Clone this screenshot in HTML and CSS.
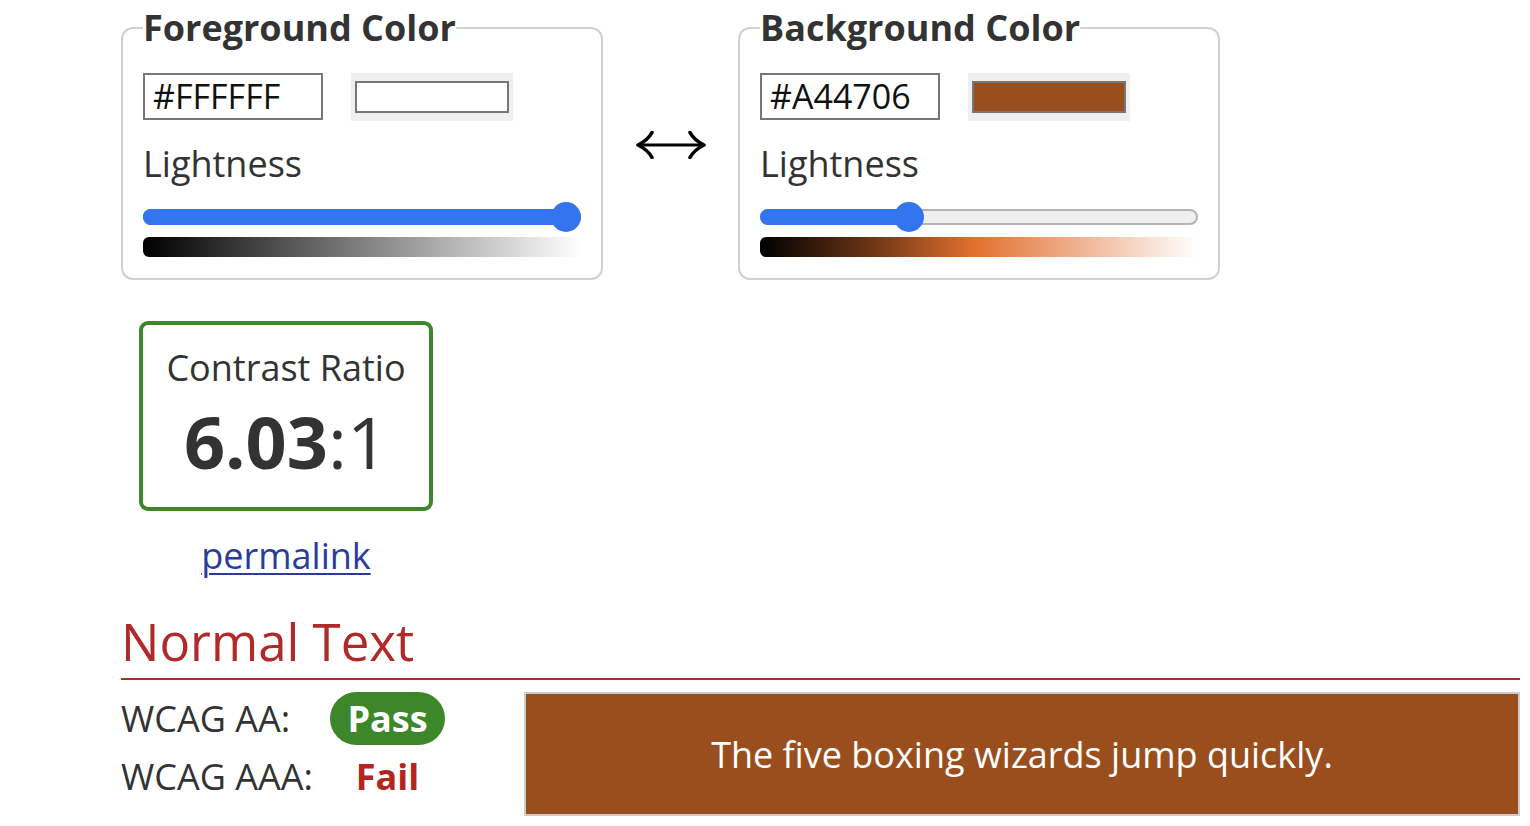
FILE: index.html
```html
<!DOCTYPE html>
<html lang="en">
<head>
<meta charset="utf-8">
<title>Contrast Checker</title>
<link rel="stylesheet" href="styles.css">
</head>
<body>
<main class="page">
  <div class="pickers">
    <fieldset class="picker">
      <legend class="picker-title">Foreground Color</legend>
      <div class="value-row">
        <input class="hex-input" type="text" value="#FFFFFF" aria-label="Foreground hex">
        <div class="swatch-wrap"><div class="swatch swatch-fg"></div></div>
      </div>
      <div class="label">Lightness</div>
      <div class="slider">
        <div class="track"></div>
        <div class="fill" style="width: 423px"></div>
        <div class="thumb" style="left: 408px"></div>
      </div>
      <div class="gradient gradient-fg"></div>
    </fieldset>

    <div class="swap" aria-label="swap colors">
      <svg width="70" height="28" viewBox="0 0 70 28" aria-hidden="true">
        <line x1="3" y1="14" x2="67" y2="14" stroke="#000" stroke-width="3.2"/>
        <path d="M16 1.5 Q12 9 2 14 Q12 19 16 26.5" fill="none" stroke="#000" stroke-width="3.6" stroke-linecap="round" stroke-linejoin="round"/>
        <path d="M54 1.5 Q58 9 68 14 Q58 19 54 26.5" fill="none" stroke="#000" stroke-width="3.6" stroke-linecap="round" stroke-linejoin="round"/>
      </svg>
    </div>

    <fieldset class="picker">
      <legend class="picker-title">Background Color</legend>
      <div class="value-row">
        <input class="hex-input" type="text" value="#A44706" aria-label="Background hex">
        <div class="swatch-wrap"><div class="swatch swatch-bg"></div></div>
      </div>
      <div class="label">Lightness</div>
      <div class="slider">
        <div class="track track-empty"></div>
        <div class="fill" style="width: 150px"></div>
        <div class="thumb" style="left: 134px"></div>
      </div>
      <div class="gradient gradient-bg"></div>
    </fieldset>
  </div>

  <div class="ratio-block">
    <div class="ratio-box">
      <div class="ratio-title">Contrast Ratio</div>
      <div class="ratio-value"><b>6.03</b>:1</div>
    </div>
    <a class="permalink" href="#">permalink</a>
  </div>

  <h2 class="section-title">Normal Text</h2>
  <div class="results">
    <div class="verdicts">
      <div class="verdict-label">WCAG AA:</div>
      <div class="verdict"><span class="pass">Pass</span></div>
      <div class="verdict-label">WCAG AAA:</div>
      <div class="verdict"><span class="fail">Fail</span></div>
    </div>
    <div class="sample">The five boxing wizards jump quickly.</div>
  </div>
</main>
</body>
</html>
```

FILE: styles.css
```css
* { box-sizing: border-box; }

html, body {
  margin: 0;
  padding: 0;
  background: #fff;
}

body {
  font-family: "Open Sans", "Liberation Sans", sans-serif;
  font-size: 36px;
  color: #333;
  overflow: hidden;
}

.page {
  padding: 5px 10px 0 121px;
}

.pickers {
  display: flex;
  align-items: flex-start;
}

.picker {
  width: 482px;
  margin: 0;
  padding: 0 20px 21px;
  border: 2px solid #d0d0d0;
  border-radius: 12px;
  min-width: 0;
}

.picker-title {
  padding: 0;
  font-weight: 700;
  font-size: 36px;
  line-height: 46px;
  color: #333;
}

.value-row {
  display: flex;
  align-items: flex-start;
  gap: 28px;
  margin-top: 22px;
}

.hex-input {
  width: 180px;
  height: 47px;
  margin: 0;
  padding: 0 8px 2px;
  border: 2px solid #777;
  border-radius: 0;
  font-family: "Open Sans", "Liberation Sans", sans-serif;
  font-size: 34px;
  color: #111;
  background: #fff;
  outline: none;
}

.swatch-wrap {
  width: 162px;
  height: 48px;
  background: #efefef;
  padding: 8px 4px 8px 4px;
}

.swatch {
  width: 100%;
  height: 32px;
  border: 2px solid #777;
}

.swatch-fg { background: #fff; }
.swatch-bg { background: #9a4e1e; }

.label {
  margin-top: 20px;
  line-height: 46px;
  color: #333;
}

.slider {
  position: relative;
  height: 30px;
  margin-top: 15px;
}

.track {
  position: absolute;
  left: 0;
  right: 0;
  top: 7px;
  height: 16px;
  border-radius: 8px;
  background: #3574ef;
}

.track-empty {
  background: #efefef;
  border: 2px solid #b4b4b4;
}

.fill {
  position: absolute;
  left: 0;
  top: 7px;
  height: 16px;
  border-radius: 8px;
  background: #3574ef;
}

.thumb {
  position: absolute;
  top: 0;
  width: 30px;
  height: 30px;
  border-radius: 50%;
  background: #3574ef;
}

.gradient {
  height: 20px;
  margin-top: 5px;
  border-radius: 6px 0 0 6px;
}

.gradient-fg {
  background: linear-gradient(to right, #000 0%, #808080 50%, #fff 100%);
}

.gradient-bg {
  background: linear-gradient(to right, #000 0%, #6a3415 25%, #e2712f 49%, #efb08e 72%, #fff 100%);
}

.swap {
  width: 135px;
  display: flex;
  justify-content: center;
  padding-top: 126px;
}

.ratio-block {
  width: 294px;
  margin-left: 18px;
  margin-top: 41px;
  display: flex;
  flex-direction: column;
  align-items: center;
}

.ratio-box {
  width: 294px;
  height: 190px;
  border: 4px solid #3c8729;
  border-radius: 9px;
  padding-top: 20px;
  text-align: center;
}

.ratio-title {
  line-height: 46px;
  color: #333;
}

.ratio-value {
  margin-top: 10px;
  font-size: 72px;
  line-height: 80px;
  color: #333;
}

.ratio-value b { font-weight: 700; }

.permalink {
  margin-top: 22px;
  line-height: 46px;
  color: #2a3b9e;
  text-decoration: underline;
  text-decoration-thickness: 2px;
  text-underline-offset: 4px;
}

.section-title {
  margin: 31px 0 0;
  padding-bottom: 6px;
  font-size: 51px;
  font-weight: 400;
  line-height: 62px;
  color: #b02a2a;
  border-bottom: 2px solid #b02a2a;
}

.results {
  display: flex;
  margin-top: 12px;
}

.verdicts {
  width: 403px;
  display: grid;
  grid-template-columns: 209px 115px;
  grid-template-rows: 53px 58px;
  align-items: center;
  row-gap: 3px;
}

.verdict-label {
  line-height: 46px;
  color: #333;
}

.verdict {
  display: flex;
  justify-content: center;
  align-self: stretch;
  align-items: center;
}

.pass {
  display: flex;
  align-items: center;
  justify-content: center;
  width: 115px;
  height: 53px;
  border-radius: 27px;
  background: #3c8729;
  color: #fff;
  font-weight: 700;
}

.fail {
  color: #b5241f;
  font-weight: 700;
  line-height: 46px;
}

.sample {
  flex: 1;
  height: 124px;
  border: 2px solid #cccccc;
  background: #9a4e1e;
  color: #fff;
  display: flex;
  align-items: center;
  justify-content: center;
  font-size: 36px;
}
```
